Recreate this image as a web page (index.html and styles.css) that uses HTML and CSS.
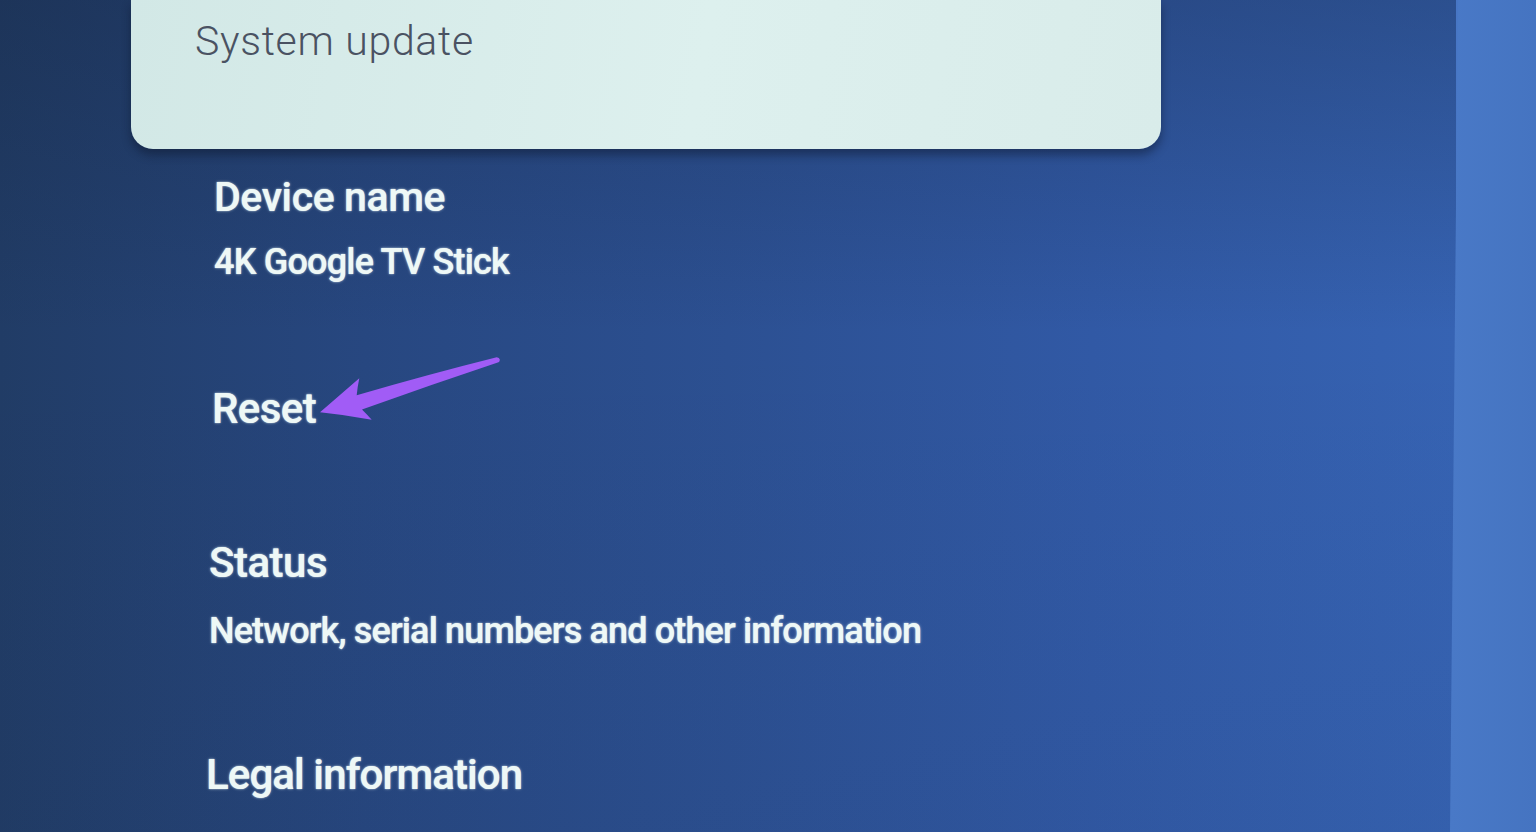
FILE: index.html
```html
<!DOCTYPE html>
<html>
<head>
<meta charset="utf-8">
<link rel="stylesheet" href="styles.css">
</head>
<body>
<div class="screen">
  <main class="main">
    <div class="card">
      <span class="card-title">System update</span>
    </div>
    <ul class="list">
      <li class="item item-device">
        <div class="title">Device name</div>
        <div class="sub">4K Google TV Stick</div>
      </li>
      <li class="item item-reset">
        <div class="title">Reset</div>
        <svg class="arrow" width="190" height="75" viewBox="0 0 190 75">
          <path d="M4 61.3 L43.3 27.3 Q41.5 36 40.7 44.3 Q112 23.5 180.7 6.3 Q183.5 6.5 183.8 8.5 Q184 10.5 182.5 11.2 Q114 34 46 58.5 Q51 63.5 55.7 68.7 Q30 64 4 61.3 Z" fill="#a15cf6"/>
        </svg>
      </li>
      <li class="item item-status">
        <div class="title">Status</div>
        <div class="sub">Network, serial numbers and other information</div>
      </li>
      <li class="item item-legal">
        <div class="title">Legal information</div>
      </li>
    </ul>
  </main>
  <aside class="side"></aside>
</div>
</body>
</html>
```

FILE: styles.css
```css
html, body {
  margin: 0;
  padding: 0;
  width: 1536px;
  height: 832px;
  overflow: hidden;
}
body {
  font-family: Roboto, "Noto Sans", sans-serif;
  background: #4776c5;
}
.screen {
  display: flex;
  width: 1536px;
  height: 832px;
  position: relative;
}
.main {
  width: 1456px;
  height: 832px;
  flex: none;
  background:
    linear-gradient(180deg, rgba(20,35,60,0.3) 0%, rgba(20,35,60,0) 40%, rgba(20,35,60,0.05) 100%),
    linear-gradient(90deg, #213c66 0%, #274780 25%, #2c5092 50%, #3159a5 75%, #3663b3 100%);
  position: relative;
}
.side {
  flex: 1;
  background: linear-gradient(90deg, #4979c7 0%, #4574c1 100%);
  margin-left: -6px;
  clip-path: polygon(8px 0, 100% 0, 100% 100%, 0 100%);
  position: relative;
}
.card {
  margin-left: 131px;
  width: 1030px;
  height: 149px;
  box-sizing: border-box;
  background: linear-gradient(100deg, #d2e8e6 0%, #ddf0ee 55%, #d9ecea 100%);
  border-radius: 0 0 22px 22px;
  box-shadow: 0 6px 10px rgba(10,20,40,0.45);
  padding: 17px 0 0 64px;
}
.card-title {
  font-size: 41px;
  font-weight: 300;
  color: #4a5262;
  letter-spacing: 0.7px;
}
.list {
  list-style: none;
  margin: 0;
  padding: 0;
}
.item {
  color: #eef8f6;
  text-shadow: 0 0 3px rgba(240,255,255,0.55), 0 0 1px rgba(240,255,255,0.8);
  position: relative;
}
.title {
  font-size: 41px;
  font-weight: 500;
  letter-spacing: -0.4px;
  line-height: 48px;
}
.sub {
  font-size: 36px;
  font-weight: 500;
  letter-spacing: -0.8px;
  line-height: 44px;
  margin-top: 19px;
}
.item-device { margin: 24px 0 0 214px; }
.item-reset { margin: 101px 0 0 212px; }
.item-reset .title { font-size: 42px; letter-spacing: -0.6px; }
.item-status { margin: 106px 0 0 209px; }
.item-status .title { font-size: 42px; letter-spacing: -0.5px; }
.item-status .sub { margin-top: 22px; letter-spacing: -0.85px; }
.item-legal { margin: 98px 0 0 206px; }
.item-legal .title { font-size: 42px; letter-spacing: -0.9px; }
.arrow {
  position: absolute;
  left: 104px;
  top: -34px;
}
```
